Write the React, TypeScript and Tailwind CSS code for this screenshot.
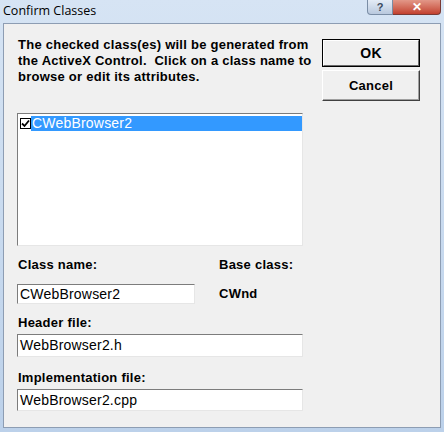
import React from 'react'

const sans = { fontFamily: '"Liberation Sans", Arial, sans-serif' }

function Sunken({ children, className = '' }: { children?: React.ReactNode; className?: string }) {
  return (
    <div
      className={`border border-t-[#7c7c7c] border-l-[#7c7c7c] border-b-[#e6e6e6] border-r-[#e6e6e6] bg-white ${className}`}
    >
      {children}
    </div>
  )
}

export default function App() {
  const [checked, setChecked] = React.useState(true)

  return (
    <div className="flex h-[432px] w-[444px] flex-col bg-gradient-to-b from-[#d6e4f4] to-[#bcd1ea]" style={sans}>
      {/* Title bar */}
      <div className="flex h-[23px] items-start justify-between">
        <span
          className="mt-[2px] pl-[3px] text-[12.5px] leading-[18px] text-black"
          style={{ fontFamily: '"Open Sans", "DejaVu Sans", sans-serif' }}
        >
          Confirm Classes
        </span>
        <div className="mr-[3px] flex">
          <div className="flex h-[15px] w-[26px] items-center justify-center rounded-bl-[4px] border border-t-0 border-[#7a8da5] bg-gradient-to-b from-[#e4ecf6] to-[#b9c9de] text-[11px] font-bold leading-none text-[#3b4a5e]">
            ?
          </div>
          <div className="flex h-[15px] w-[48px] items-center justify-center rounded-br-[4px] border border-t-0 border-l-0 border-[#7a3a35] bg-gradient-to-b from-[#e29788] to-[#c2402f] text-[12px] font-bold leading-none text-white">
            ✕
          </div>
        </div>
      </div>

      {/* Client area */}
      <div className="mx-[3px] mb-[4px] flex flex-1 border border-[#8d9db3] bg-[#f0f0f0] text-black">
        <div className="ml-[13px] flex w-[286px] flex-col">
          <p className="mt-[13px] whitespace-nowrap pl-[1px] text-[13px] font-bold leading-[16px] tracking-[0.25px]">
            The checked class(es) will be generated from
            <br />
            the ActiveX Control.&nbsp; Click on a class name to
            <br />
            browse or edit its attributes.
          </p>

          <Sunken className="mt-[28px] h-[133px] pt-[2px]">
            <div className="flex h-[15px] items-center">
              <button
                onClick={() => setChecked(!checked)}
                className="ml-[2px] flex h-[11px] w-[11px] items-center justify-center border border-black bg-white"
              >
                {checked && (
                  <svg width="9" height="9" viewBox="0 0 9 9">
                    <path d="M1 4.5 L3.5 7 L8 1.5" stroke="black" strokeWidth="1.8" fill="none" />
                  </svg>
                )}
              </button>
              <div className="flex h-[15px] flex-1 items-center bg-[#3399ff] pl-[1px] text-[14px] tracking-[0.2px] text-white">
                CWebBrowser2
              </div>
            </div>
          </Sunken>

          <div className="mt-[11px] flex text-[13px] font-bold leading-[16px] tracking-[0.25px]">
            <span className="w-[202px] pl-[1px]">Class name:</span>
            <span>Base class:</span>
          </div>
          <div className="mt-[11px] flex items-center">
            <Sunken className="flex h-[20px] w-[178px] items-center pl-[2px] text-[14px] tracking-[0.2px]">CWebBrowser2</Sunken>
            <span className="ml-[24px] text-[13px] font-bold tracking-[0.25px]">CWnd</span>
          </div>

          <div className="mt-[11px] pl-[1px] text-[13px] font-bold leading-[16px] tracking-[0.25px]">Header file:</div>
          <Sunken className="mt-[3px] flex h-[23px] items-center pl-[2px] text-[14px] tracking-[0.2px]">WebBrowser2.h</Sunken>

          <div className="mt-[13px] pl-[1px] text-[13px] font-bold leading-[16px] tracking-[0.25px]">Implementation file:</div>
          <Sunken className="mt-[3px] flex h-[22px] items-center pl-[2px] text-[14px] tracking-[0.2px]">WebBrowser2.cpp</Sunken>
        </div>

        <div className="ml-[19px] flex w-[98px] flex-col">
          <div className="mt-[15px] h-[28px] border border-black">
            <button className="flex h-full w-full items-center justify-center border border-t-white border-l-white border-b-[#696969] border-r-[#696969] bg-[#f0f0f0] text-[14px] font-bold tracking-[0.25px]">
              OK
            </button>
          </div>
          <button className="mt-[3px] flex h-[31px] items-center justify-center border border-t-white border-l-white border-b-[#404040] border-r-[#404040] bg-[#f0f0f0] text-[13px] font-bold tracking-[0.25px] shadow-[inset_-1px_-1px_0_#a0a0a0]">
            Cancel
          </button>
        </div>
      </div>
    </div>
  )
}
